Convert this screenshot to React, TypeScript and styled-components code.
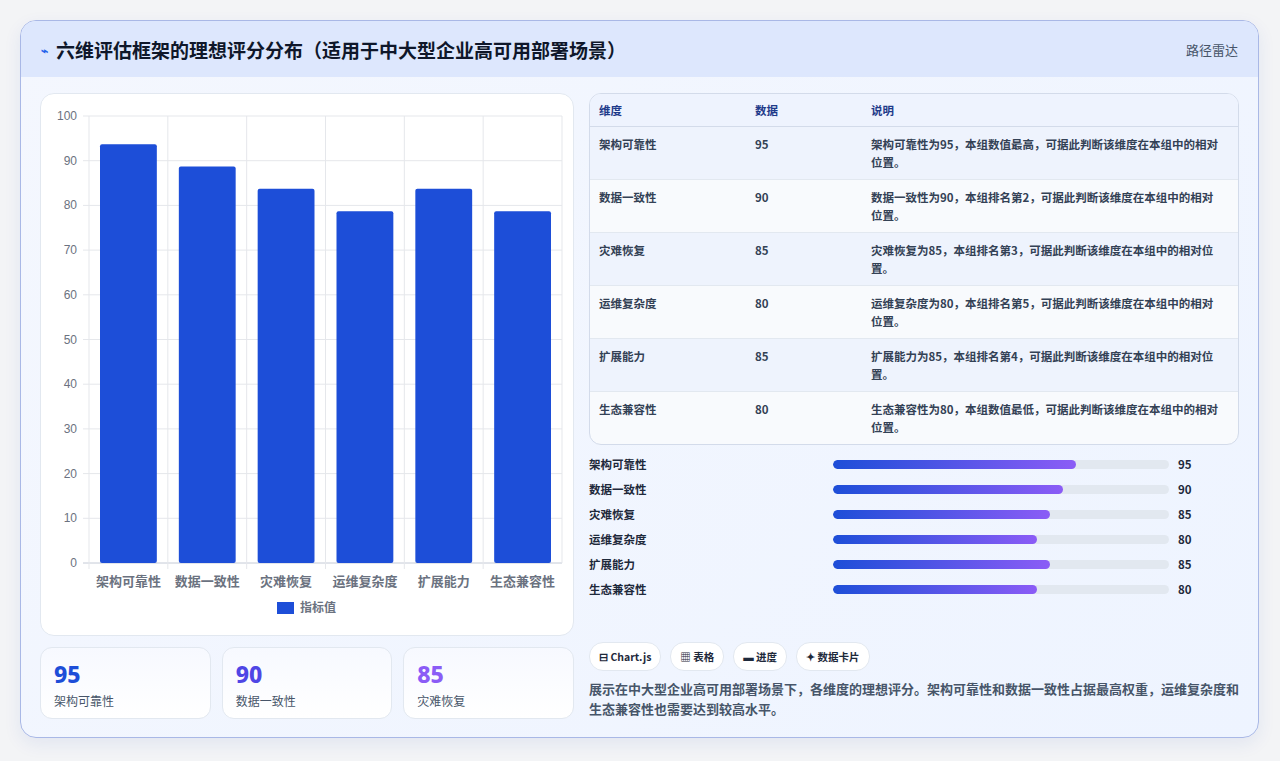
import React from 'react';
import styled, { createGlobalStyle } from 'styled-components';

const data = [
  { name: '架构可靠性', value: 95, rank: '本组数值最高' },
  { name: '数据一致性', value: 90, rank: '本组排名第2' },
  { name: '灾难恢复', value: 85, rank: '本组排名第3' },
  { name: '运维复杂度', value: 80, rank: '本组排名第5' },
  { name: '扩展能力', value: 85, rank: '本组排名第4' },
  { name: '生态兼容性', value: 80, rank: '本组数值最低' },
];

const Global = createGlobalStyle`
  body { margin: 0; background: #f3f4f6; font-family: "Noto Sans CJK SC", "Noto Sans", sans-serif; }
`;

const Page = styled.div`
  padding: 20px 21px 21px 20px;
  height: 761px;
  box-sizing: border-box;
`;

const Card = styled.div`
  border: 1px solid #a9b8e6;
  border-radius: 16px;
  background: linear-gradient(135deg, #f4f7fe 0%, #eef4ff 100%);
  overflow: hidden;
  box-shadow: 0 6px 18px rgba(30, 64, 175, 0.08);
`;

const Header = styled.div`
  height: 56px;
  background: #dde7fd;
  display: flex;
  align-items: center;
  justify-content: space-between;
  padding: 0 20px;
`;

const Title = styled.h1`
  margin: 0;
  font-size: 19px;
  font-weight: 700;
  color: #0f172a;
  display: flex;
  align-items: center;
  gap: 8px;
`;

const Link = styled.span`
  font-size: 13px;
  color: #475569;
`;

const Body = styled.div`
  display: grid;
  grid-template-columns: 534px 1fr;
  gap: 15px;
  padding: 16px 19px 18px 19px;
`;

const Col = styled.div`
  display: flex;
  flex-direction: column;
  gap: 11px;
`;

const ChartCard = styled.div`
  background: #fff;
  border: 1px solid #e2e8f0;
  border-radius: 14px;
  height: 543px;
  box-sizing: border-box;
`;

const Stats = styled.div`
  display: grid;
  grid-template-columns: repeat(3, 1fr);
  gap: 11px;
`;

const Stat = styled.div`
  background: linear-gradient(180deg, #f7f9ff, #ffffff);
  border: 1px solid #e2e8f0;
  border-radius: 12px;
  height: 72px;
  padding: 12px 13px;
  box-sizing: border-box;
`;

const StatNum = styled.div<{ $c: string }>`
  font-size: 23px;
  font-weight: 800;
  line-height: 28px;
  color: ${p => p.$c};
  font-family: "Noto Sans", sans-serif;
`;

const StatLabel = styled.div`
  font-size: 12px;
  color: #475569;
  margin-top: 4px;
`;

const Table = styled.table`
  width: 100%;
  border-collapse: separate;
  border-spacing: 0;
  border: 1px solid #d3dbea;
  border-radius: 12px;
  overflow: hidden;
  font-size: 11.5px;
  background: #f8fafd;
  th {
    text-align: left;
    font-weight: 700;
    color: #1e3a8a;
    background: #eef3fe;
    height: 32px;
    padding: 0 9px;
    border-bottom: 1px solid #d3dbea;
  }
  td {
    padding: 8px 9px;
    height: 36px;
    vertical-align: top;
    color: #334155;
    font-weight: 600;
    line-height: 18px;
    border-bottom: 1px solid #e2e8f0;
  }
  td:last-child { padding-right: 14px; }
  tr:nth-child(odd) td { background: #eef3fd; }
  tr:last-child td { border-bottom: none; }
`;

const Bars = styled.div`
  display: flex;
  flex-direction: column;
  gap: 7px;
  margin-top: 10px;
`;

const BarRow = styled.div`
  display: grid;
  grid-template-columns: 235px 336px 1fr;
  align-items: center;
  gap: 9px;
  height: 18px;
  font-size: 11.5px;
  font-weight: 600;
  color: #1e293b;
`;

const Track = styled.div`
  height: 9px;
  background: #e2e8f0;
  border-radius: 5px;
  overflow: hidden;
`;

const Fill = styled.div`
  height: 100%;
  border-radius: 5px;
  background: linear-gradient(90deg, #1d4ed8, #8b5cf6);
`;

const Tags = styled.div`
  display: flex;
  gap: 9px;
  margin-top: 44px;
`;

const Tag = styled.span`
  background: #fff;
  border: 1px solid #e2e8f0;
  border-radius: 14px;
  padding: 0 9px;
  height: 27px;
  display: flex;
  align-items: center;
  font-size: 10.5px;
  font-weight: 700;
  color: #1e293b;
`;

const Desc = styled.p`
  margin: 8px 0 0;
  font-size: 13px;
  line-height: 20px;
  color: #475569;
  font-weight: 600;
`;

function Chart() {
  const x0 = 48, y0 = 22, w = 473, h = 447;
  const cw = w / 6;
  const ticks = [0, 10, 20, 30, 40, 50, 60, 70, 80, 90, 100];
  return (
    <svg width="532" height="541" style={{ display: 'block' }}>
      {ticks.map(t => {
        const y = y0 + h - (t / 100) * h;
        return (
          <g key={t}>
            <line x1={x0 - 6} x2={x0 + w} y1={y} y2={y} stroke={t === 0 ? '#c4cad6' : '#e5e7eb'} />
            <text x={x0 - 12} y={y + 4} textAnchor="end" fontSize="12" fill="#6b7280" fontFamily="Liberation Sans, sans-serif">{t}</text>
          </g>
        );
      })}
      {data.map((d, i) => {
        const bx = x0 + i * cw;
        const bh = ((d.value - 1.3) / 100) * h;
        return (
          <g key={d.name}>
            <line x1={bx} x2={bx} y1={y0} y2={y0 + h + 6} stroke="#e5e7eb" />
            <rect x={bx + 11} y={y0 + h - bh} width={cw - 22} height={bh} fill="#1d4ed8" rx="2" />
            <text x={bx + cw / 2} y={y0 + h + 23} textAnchor="middle" fontSize="13" fill="#6b7280" fontWeight="600">{d.name}</text>
          </g>
        );
      })}
      <line x1={x0 + w} x2={x0 + w} y1={y0} y2={y0 + h} stroke="#e5e7eb" />
      <rect x="236" y="508" width="17" height="12" fill="#1d4ed8" />
      <text x="259" y="518" fontSize="12" fill="#6b7280" fontWeight="600">指标值</text>
    </svg>
  );
}

export default function App() {
  const statColors = ['#1d4ed8', '#4f46e5', '#8b5cf6'];
  return (
    <Page>
      <Global />
      <Card>
        <Header>
          <Title><span style={{ color: '#2563eb', fontSize: 12 }}>⌁</span>六维评估框架的理想评分分布（适用于中大型企业高可用部署场景）</Title>
          <Link>路径雷达</Link>
        </Header>
        <Body>
          <Col>
            <ChartCard><Chart /></ChartCard>
            <Stats>
              {data.slice(0, 3).map((d, i) => (
                <Stat key={d.name}>
                  <StatNum $c={statColors[i]}>{d.value}</StatNum>
                  <StatLabel>{d.name}</StatLabel>
                </Stat>
              ))}
            </Stats>
          </Col>
          <Col style={{ gap: 0 }}>
            <Table>
              <thead>
                <tr><th style={{ width: 138 }}>维度</th><th style={{ width: 98 }}>数据</th><th>说明</th></tr>
              </thead>
              <tbody>
                {data.map(d => (
                  <tr key={d.name}>
                    <td>{d.name}</td>
                    <td>{d.value}</td>
                    <td>{d.name}为{d.value}，{d.rank}，可据此判断该维度在本组中的相对位置。</td>
                  </tr>
                ))}
              </tbody>
            </Table>
            <Bars>
              {data.map(d => (
                <BarRow key={d.name}>
                  <span>{d.name}</span>
                  <Track><Fill style={{ width: `${d.value * 0.76}%` }} /></Track>
                  <span>{d.value}</span>
                </BarRow>
              ))}
            </Bars>
            <Tags>
              <Tag>⊟ Chart.js</Tag>
              <Tag>▦ 表格</Tag>
              <Tag>▬ 进度</Tag>
              <Tag>✦ 数据卡片</Tag>
            </Tags>
            <Desc>展示在中大型企业高可用部署场景下，各维度的理想评分。架构可靠性和数据一致性占据最高权重，运维复杂度和生态兼容性也需要达到较高水平。</Desc>
          </Col>
        </Body>
      </Card>
    </Page>
  );
}
